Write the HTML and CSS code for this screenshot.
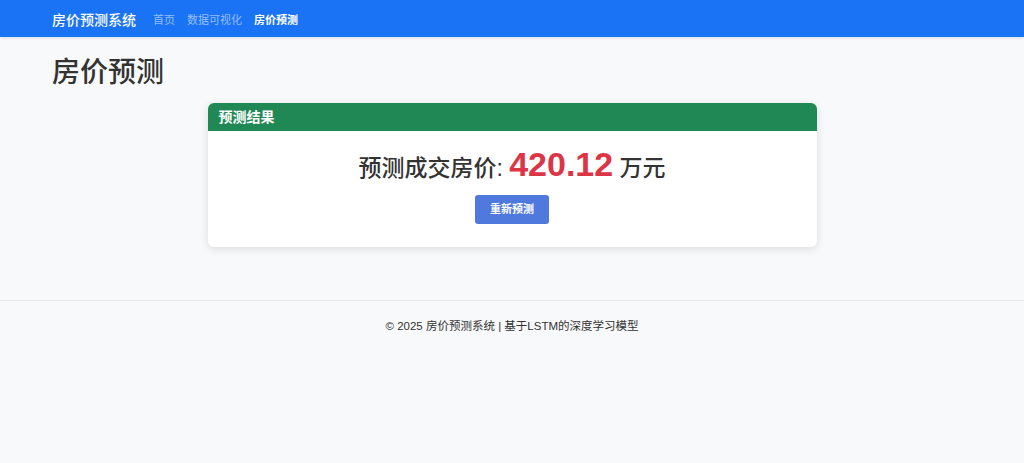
FILE: index.html
```html
<!DOCTYPE html>
<html lang="zh-CN">
<head>
    <meta charset="UTF-8">
    <meta name="viewport" content="width=device-width, initial-scale=1.0">
    <title>房价预测 - 房价预测系统</title>
    <link rel="stylesheet" href="styles.css">
</head>
<body>
    <nav class="navbar">
        <a class="brand" href="#">房价预测系统</a>
        <ul class="nav-links">
            <li><a href="#">首页</a></li>
            <li><a href="#">数据可视化</a></li>
            <li><a class="active" href="#">房价预测</a></li>
        </ul>
    </nav>

    <main class="container">
        <h1>房价预测</h1>

        <div class="card">
            <div class="card-header">预测结果</div>
            <div class="card-body">
                <p class="result">预测成交房价: <span class="price">420.12</span> 万元</p>
                <a class="btn" href="#">重新预测</a>
            </div>
        </div>
    </main>

    <footer class="footer">
        <p>&copy; 2025 房价预测系统 | 基于LSTM的深度学习模型</p>
    </footer>
</body>
</html>
```

FILE: styles.css
```css
body {
    font-family: "Liberation Sans", "Noto Sans CJK SC", sans-serif;
    background: #f8f9fa;
    margin: 0;
    color: #212529;
}

a {
    text-decoration: none;
}

.navbar {
    background: #1a73f5;
    height: 37px;
    padding: 0 52px;
    display: flex;
    align-items: center;
    gap: 17px;
    box-shadow: 0 1px 3px rgba(0, 0, 0, 0.12);
}

.brand {
    color: #fff;
    font-size: 14px;
    font-weight: 500;
}

.nav-links {
    list-style: none;
    margin: 0;
    padding: 0;
    display: flex;
    gap: 12px;
}

.nav-links a {
    color: rgba(255, 255, 255, 0.55);
    font-size: 11px;
}

.nav-links a.active {
    color: #fff;
    font-weight: bold;
}

.container {
    padding: 0 52px;
}

h1 {
    font-size: 28px;
    font-weight: 500;
    color: #333;
    line-height: 1.2;
    margin: 19px 0 13px;
}

.card {
    width: 609px;
    margin: 0 auto;
    background: #fff;
    border-radius: 6px;
    overflow: hidden;
    box-shadow: 0 2px 8px rgba(0, 0, 0, 0.12);
}

.card-header {
    background: #208855;
    color: #fff;
    font-size: 14px;
    font-weight: bold;
    height: 28px;
    line-height: 28px;
    padding: 0 11px;
}

.card-body {
    padding: 13px 0 23px;
    text-align: center;
}

.result {
    margin: 0 0 7px;
    font-size: 23px;
    font-weight: 500;
    color: #333;
    line-height: 40px;
}

.price {
    color: #dc3545;
    font-size: 34px;
    font-weight: bold;
}

.btn {
    display: inline-block;
    background: #5079dd;
    color: #fff;
    font-size: 11px;
    font-weight: bold;
    height: 29px;
    line-height: 29px;
    padding: 0 15px;
    border-radius: 3px;
}

.footer {
    margin-top: 53px;
    border-top: 1px solid #e4e6ee;
    text-align: center;
    padding-top: 17px;
}

.footer p {
    margin: 0;
    font-size: 11.5px;
    color: #333;
    line-height: 17px;
}
```
